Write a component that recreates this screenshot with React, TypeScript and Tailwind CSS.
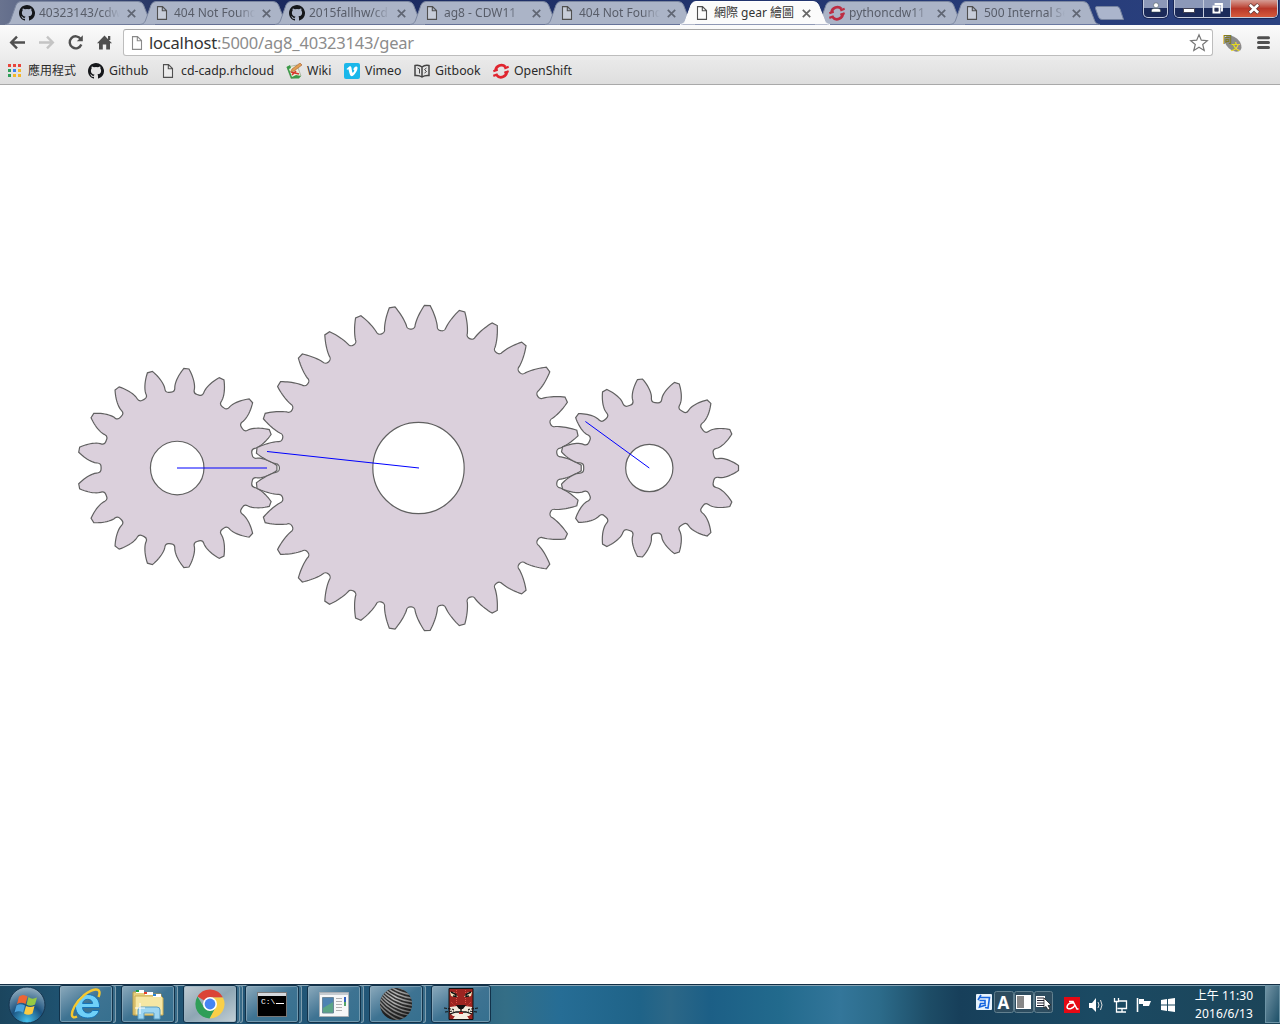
import React from "react";

const M = 10.5;
const polar = (r: number, a: number) => [r * Math.cos(a), r * Math.sin(a)];
const inv = (rb: number, r: number) => {
  const t = Math.sqrt(Math.max(0, (r * r) / (rb * rb) - 1));
  return t - Math.atan(t);
};

function gearPath(z: number) {
  const rp = (z * M) / 2;
  const rb = rp * Math.cos((25 * Math.PI) / 180);
  const ra = rp + M;
  const rr = rp - 1.25 * M;
  const fr = 1.5 * 0.25 * M;
  const rf = Math.sqrt((rr + fr) ** 2 - fr ** 2);
  const start = Math.max(rb, rf);
  const half = Math.PI / z / 2;
  const at = (r: number) => half + inv(rb, rp) - inv(rb, r);
  const fillet = Math.atan(fr / (fr + rr));
  const f = (p: number[]) => p[0].toFixed(2) + " " + p[1].toFixed(2);
  let d = "";
  for (let i = 0; i < z; i++) {
    const c = (i * 2 * Math.PI) / z;
    const base = at(start);
    const rootR = polar(rr, c - base - fillet);
    d += (i === 0 ? "M" : "L") + f(rootR);
    d += `A${fr} ${fr} 0 0 0 ${f(polar(rf, c - base))}`;
    for (let k = 0; k <= 10; k++) {
      const r = start + ((ra - start) * k) / 10;
      d += "L" + f(polar(r, c - at(r)));
    }
    for (let k = 10; k >= 0; k--) {
      const r = start + ((ra - start) * k) / 10;
      d += "L" + f(polar(r, c + at(r)));
    }
    d += "L" + f(polar(rf, c + base));
    d += `A${fr} ${fr} 0 0 0 ${f(polar(rr, c + base + fillet))}`;
  }
  const h = rp * 0.3;
  return d + `ZM${h} 0A${h} ${h} 0 1 0 ${-h} 0A${h} ${h} 0 1 0 ${h} 0Z`;
}

function Gears() {
  const gears = [
    { x: 177.2, z: 17 },
    { x: 418.5, z: 29 },
    { x: 649.3, z: 15 },
  ];
  return (
    <svg width="1280" height="899" viewBox="0 85 1280 899" className="block">
      {gears.map((g) => (
        <path key={g.x} d={gearPath(g.z)} transform={`translate(${g.x} 468)`} fill="#dbd0dc" stroke="#606060" strokeWidth="1.200" fillRule="evenodd" />
      ))}
      <path d="M177 468H267M419 468L267 451.5M649.3 468L585.4 421.5" stroke="#0000ff" fill="none" />
    </svg>
  );
}

const Page = ({ c = "#505050" }: { c?: string }) => (
  <svg width="16" height="16" viewBox="0 0 16 16" className="shrink-0" fill="#ffffff55" stroke={c} strokeWidth="1.100">
    <path d="M3.500 1.600H8.500L12.500 5.600V14.400H3.500ZM8.300 1.800V5.800H12.300" />
  </svg>
);
const Github = () => (
  <svg width="16" height="16" viewBox="0 0 16 16" className="shrink-0" fill="#15171a">
    <path d="M8 0C3.6 0 0 3.6 0 8c0 3.5 2.3 6.500 5.500 7.600.4.1.5-.2.5-.4v-1.400c-2.200.500-2.700-.9-2.700-.9-.4-.9-.9-1.200-.9-1.200-.7-.5.1-.5.1-.5.8.1 1.200.8 1.200.8.7 1.200 1.900.9 2.300.7.100-.5.3-.9.5-1.100-1.800-.2-3.600-.9-3.600-4 0-.9.3-1.600.8-2.100-.1-.2-.4-1 .1-2.100 0 0 .7-.2 2.200.8a7.500 7.500 0 0 1 4 0c1.500-1 2.200-.8 2.200-.8.4 1.100.2 1.900.1 2.100.5.6.8 1.300.8 2.100 0 3.100-1.900 3.700-3.700 3.900.3.300.6.800.6 1.500v2.200c0 .2.1.5.5.4A8 8 0 0 0 8 0Z" />
  </svg>
);
const OpenShift = ({ c = "#e0252f" }: { c?: string }) => (
  <svg width="16" height="16" viewBox="0 0 16 16" className="shrink-0" fill="none" stroke={c} strokeWidth="2.700">
    <path d="M2.600 7.500A5.700 5.700 0 0 1 12.500 4M13.700 8A5.700 5.700 0 0 1 3.500 12" />
    <path d="M.3 8.200L4.700 6.600M11.300 5.400L15.700 3.800M.3 12.900L4.700 11.300M11.300 9.800L15.700 8.200" strokeWidth="2.200" />
  </svg>
);

const tabs = [
  { t: "40323143/cdw", i: "g" },
  { t: "404 Not Found", i: "p" },
  { t: "2015fallhw/cd", i: "g" },
  { t: "ag8 - CDW11", i: "p" },
  { t: "404 Not Found", i: "p" },
  { t: "網際 gear 繪圖", i: "p", active: true },
  { t: "pythoncdw11", i: "o" },
  { t: "500 Internal Se", i: "p" },
];

function Tab({ t, i, active }: { t: string; i: string; active?: boolean }) {
  return (
    <div className={"relative -mr-[15px] h-[25px] w-[150px] shrink-0 " + (active ? "z-10" : "")}>
      <svg className="absolute inset-0" width="150" height="25" viewBox="0 0 150 25">
        <path
          d="M0 24.500C4 24 5 22 6 19L11 5Q12.500 1.500 16 1.500H133Q137 1.500 138.500 5L144 19C145 22 146 24 150 24.500"
          fill={active ? "#fbfbfb" : "#abb4c7"}
          stroke={active ? "#fff" : "#7c87a0"}
        />
      </svg>
      <div className="relative flex h-[26px] items-center pl-[14px]">
        {i === "g" ? <Github /> : i === "o" ? <OpenShift c="#bd2d42" /> : <Page />}
        <span
          className={
            "ml-[4px] w-[81px] overflow-hidden whitespace-nowrap text-[12px] " +
            (active ? "text-[#333]" : "text-[#585d69] [mask-image:linear-gradient(90deg,#000_78%,transparent)]")
          }
        >
          {t}
        </span>
        <svg className="ml-[7px] shrink-0" width="9" height="9" viewBox="0 0 9 9" stroke={active ? "#666" : "#606673"} strokeWidth="1.700">
          <path d="M.8 .8L8.200 8.200M8.200 .8L.8 8.200" />
        </svg>
      </div>
    </div>
  );
}

function WindowButtons() {
  return (
    <div className="absolute right-[2px] top-0 flex gap-[6px]">
      <div className="flex h-[18px] w-[25px] justify-center rounded-b-[5px] border border-t-0 border-[#c4cbdc] bg-linear-to-b from-[#8c98b8] from-45% to-[#1c2b5a] to-50% shadow-[0_0_0_1px_#1a2858]">
        <svg width="10" height="11" viewBox="0 0 10 11" className="mt-[2px]" fill="#fff" stroke="#344" strokeWidth=".5">
          <circle cx="5" cy="3.300" r="2.500" />
          <path d="M.5 10V8Q.5 6.500 3 6.500H7Q9.500 6.500 9.500 8V10Z" />
        </svg>
      </div>
      <div className="flex h-[18px] w-[104px] overflow-hidden rounded-b-[5px] border border-t-0 border-[#c4cbdc] shadow-[0_0_0_1px_#1a2858]">
        <div className="flex w-[29px] items-center justify-center border-r border-[#c4cbdc] bg-linear-to-b from-[#8c98b8] from-45% to-[#1c2b5a] to-50%">
          <div className="mt-[3px] h-[5px] w-[12px] border border-[#445] bg-white" />
        </div>
        <div className="flex w-[27px] items-center justify-center border-r border-[#c4cbdc] bg-linear-to-b from-[#8c98b8] from-45% to-[#1c2b5a] to-50%">
          <svg width="13" height="13" viewBox="0 0 13 13" fill="none">
            <path d="M4.500 3V2H11V8.500H10" stroke="#fff" strokeWidth="1.800" />
            <path d="M2.500 4.500H8.500V10.500H2.500Z" stroke="#fff" strokeWidth="2" />
            <path d="M4 6.500H7V9H4Z" stroke="#445" strokeWidth=".6" />
          </svg>
        </div>
        <div className="flex flex-1 items-center justify-center bg-linear-to-b from-[#d59d96] from-0% via-[#b8382a] via-50% to-[#d65a3c]">
          <svg width="14" height="12" viewBox="0 0 14 12" fill="none">
            <path d="M2.500 1.500L11.500 10M11.500 1.500L2.500 10" stroke="#5b3434" strokeWidth="4" />
            <path d="M2.800 1.800L11.200 9.700M11.200 1.800L2.800 9.700" stroke="#fff" strokeWidth="2.600" />
          </svg>
        </div>
      </div>
    </div>
  );
}

function Toolbar() {
  return (
    <div className="flex h-[35px] items-center bg-linear-to-b from-[#fbfbfb] to-[#ebebeb]">
      <svg width="123" height="35" viewBox="0 25 123 35" className="shrink-0" fill="none" stroke="#505050" strokeWidth="2.400">
        <path d="M25 42.500H12M17 36.700L11.200 42.500L17 48.300" />
        <path d="M39 42.500H52M47 36.700L52.800 42.500L47 48.300" stroke="#c4c4c4" />
        <path d="M80.700 39A6 6 0 1 0 81.300 44.500" />
        <path d="M82.800 35.300V41.300H76.800Z" fill="#505050" stroke="none" />
        <path d="M97 43.200L104.500 35.500L112 43.200H110V49.500H106.200V44.500H102.800V49.500H99V43.200ZM108 36H110.300V40H108Z" fill="#505050" stroke="none" />
      </svg>
      <div className="flex h-[27px] w-[1090px] shrink-0 items-center rounded-[3px] border border-[#bdbdbd] border-t-[#a6a6a6] bg-white pl-[5px]">
        <Page c="#8a8a8a" />
        <span className="ml-[4px] flex-1 text-[16.500px] leading-[24px] tracking-[-0.2px] text-[#8c8c8c]">
          <span className="text-[#333]">localhost</span>:5000/ag8_40323143/gear
        </span>
        <svg width="20" height="20" viewBox="0 0 20 20" className="mr-[3px]" fill="#fff" stroke="#777" strokeWidth="1.200">
          <path d="M10 1.700L12.300 7.200L18.300 7.700L13.700 11.500L15.200 17.500L10 14.200L4.800 17.500L6.300 11.500L1.700 7.700L7.700 7.200Z" />
        </svg>
      </div>
      <svg width="67" height="35" viewBox="1213 25 67 35" className="shrink-0">
        <ellipse cx="1233" cy="43.500" rx="10" ry="6.300" transform="rotate(42 1233 43.500)" fill="#8b8b8b" />
        <text x="1223" y="43" fontSize="9" fontWeight="700" fill="#7f7a20" fontFamily="Noto Sans CJK TC, sans-serif">同</text>
        <text x="1231" y="50" fontSize="9" fontWeight="700" fill="#e7d81f" fontFamily="Noto Sans CJK TC, sans-serif">文</text>
        <path d="M1258.500 37.800H1268.500M1258.500 42.600H1268.500M1258.500 47.400H1268.500" stroke="#505050" strokeWidth="3" strokeLinecap="round" />
      </svg>
    </div>
  );
}

function Bookmark({ icon, label, className }: { icon: React.ReactNode; label: string; className: string }) {
  return (
    <div className={"flex shrink-0 items-center gap-[5px] whitespace-nowrap " + className}>
      {icon}
      <span>{label}</span>
    </div>
  );
}

function Bookmarks() {
  const grid = ["#e8453c", "#e8453c", "#e8453c", "#2f9e58", "#3d7ff0", "#f3b72b", "#2f9e58", "#f3b72b", "#f3b72b"];
  return (
    <div className="flex h-[25px] items-center border-b border-[#a9a9a9] bg-linear-to-b from-[#e9e9e9] to-[#dedede] pb-[2px] pl-[8px] text-[12.300px] text-[#2a2a2a]">
      <Bookmark
        className="w-[80px] text-[12px]"
        label="應用程式"
        icon={
          <div className="mr-[2px] grid grid-cols-3 gap-[2px] pb-[2px]">
            {grid.map((c, i) => (
              <div key={i} className="size-[3px]" style={{ background: c }} />
            ))}
          </div>
        }
      />
      <Bookmark className="w-[72px]" label="Github" icon={<Github />} />
      <Bookmark className="w-[126px]" label="cd-cadp.rhcloud" icon={<Page />} />
      <Bookmark
        className="w-[58px]"
        label="Wiki"
        icon={
          <svg width="16" height="16" viewBox="0 0 16 16">
            <path d="M1 4L11 2L15 13L5 15.500Z" fill="#e9eedb" stroke="#9aa58e" strokeWidth=".7" />
            <path d="M.5 4L4 2L5 5L3 6L6 14L10 12L15 13L13 15.500L5 15.500Z" fill="#3b9a48" />
            <path d="M5 9L13 11M6 12L10 8" stroke="#d7372b" strokeWidth="1.600" />
            <path d="M14 0L6 6L4.500 9L8 8L16 2Z" fill="#e0a052" stroke="#a85a34" strokeWidth=".6" />
          </svg>
        }
      />
      <Bookmark
        className="w-[70px]"
        label="Vimeo"
        icon={
          <svg width="16" height="16" viewBox="0 0 16 16">
            <rect width="16" height="16" rx="2" fill="#1ab7ea" />
            <path d="M2.500 6L5 3.700C6.500 2.800 7.200 3.500 7.500 5L8.200 9C8.500 10 9 9.900 9.700 8.700C10.600 7.200 10.500 6.400 9.200 6.900C9.700 4.700 11 3.300 12.500 3.500C14 3.700 13.700 6 12.700 8C11.500 10.300 9.300 13 7.800 13.200C6 13.200 5.500 10 4.500 6.500C4.200 5.800 3.800 6.300 3.200 6.700Z" fill="#fff" />
          </svg>
        }
      />
      <Bookmark
        className="w-[79px]"
        label="Gitbook"
        icon={
          <svg width="16" height="16" viewBox="0 0 16 16" fill="none" stroke="#444" strokeWidth="1.500">
            <path d="M1 2.500Q5 1.500 8 4Q11 1.500 15 2.500V12.500Q11 12 8 14Q5 12 1 12.500ZM8 4V14" />
            <path d="M3.500 5L5.500 6V10.500M12.500 5L10.500 6.500L12.500 8.500L10.500 10" strokeWidth="1" />
          </svg>
        }
      />
      <Bookmark className="w-[90px]" label="OpenShift" icon={<OpenShift />} />
    </div>
  );
}

const IE = (
  <svg width="32" height="32" viewBox="0 0 32 32">
    <path
      d="M29.500 19.500H12.500C12.800 23 15 25 18 25C20.200 25 21.600 24.200 22.500 22.500H29C27.500 27.500 23.500 30 17.800 30C10.500 30 5.500 25.500 5.500 18.500C5.500 11.500 10.500 6.500 17.500 6.500C25 6.500 30 11.500 29.500 19.500ZM12.600 15.500H22.600C22.300 12.800 20.500 11.300 17.700 11.300C14.900 11.300 13 12.800 12.600 15.500Z"
      fill="#6fd0f8"
      stroke="#1573b8"
      fillRule="evenodd"
    />
    <path d="M7 28.500C1 31.500 .5 26 4.500 18.500C9 10 19 2 25.500 1.500C29.500 1.200 30.500 4.500 28.500 9" fill="none" stroke="#f6c72f" strokeWidth="2.400" />
  </svg>
);
const Explorer = (
  <svg width="32" height="32" viewBox="0 0 32 32">
    <path d="M1 4H12L14 6H29V27H1Z" fill="#e6cf7d" stroke="#b99c48" />
    <path d="M3 8H29L31 10V27H3Z" fill="#f6e7a4" stroke="#c9ab55" />
    <path d="M4 2H12V5H4ZM13 4H21V7H13ZM21 6H29V9H21Z" fill="#fff" />
    <path d="M4 2H7V4H4Z" fill="#1ca341" /><path d="M12 4H15V6H12Z" fill="#e53d2b" /><path d="M21 6H24V8H21Z" fill="#2583d6" />
    <path d="M6 31V22Q6 19 9 19H25Q28 19 28 22V31H22V25H12V31Z" fill="#9dd6f2" stroke="#5b9ec4" />
    <path d="M8 15V26M3 20H13" stroke="#fff" />
  </svg>
);
const Chrome = (
  <svg width="32" height="32" viewBox="0 0 32 32">
    <path d="M16 16L3.500 8.500A14.500 14.500 0 0 1 29 9.500H16Z" fill="#db4437" />
    <path d="M29 9.500A14.500 14.500 0 0 1 15.500 30.500L22 18L16 9.500Z" fill="#f9cf48" />
    <path d="M3.500 8.500A14.500 14.500 0 0 0 15.500 30.500L21.500 19.500L10 19.500Z" fill="#2f9e58" />
    <circle cx="16" cy="16" r="7" fill="#fff" /><circle cx="16" cy="16" r="5.400" fill="#4584f3" />
  </svg>
);
const Cmd = (
  <div className="h-[25px] w-[30px] border border-[#777] bg-black">
    <div className="h-[3px] bg-[#d5d9dd]" />
    <div className="flex pl-[3px] font-['Liberation_Mono'] text-[8px] leading-[11px] text-white">
      C:\<span className="ml-[1px] mt-[7px] h-[1px] w-[8px] bg-white" />
    </div>
  </div>
);
const Doc = (
  <svg width="32" height="32" viewBox="0 0 32 32">
    <path d="M1.500 4.500H30.500V28.500H1.500Z" fill="#f7f8f8" stroke="#a8afb5" />
    <path d="M2 5H30V7H2Z" fill="#c6ccd1" />
    <path d="M4.500 9.500H15.500V25H4.500Z" fill="#5ba486" stroke="#6c879a" />
    <path d="M5 10H15V14L5 20Z" fill="#4e83b2" />
    <path d="M18 10.500H24M18 13.500H24M18 16.500H24M18 19.500H24M18 22.500H24" stroke="#b1b1b1" />
    <path d="M26 9H28V14H26Z" fill="#315fbe" /><path d="M26 14H28V18H26Z" fill="#55a568" />
  </svg>
);
const Ball = (
  <svg width="34" height="34" viewBox="0 0 34 34">
    <defs>
      <clipPath id="ball"><circle cx="17" cy="17" r="16" /></clipPath>
      <radialGradient id="shade" cx=".45" cy=".3" r=".75"><stop offset="0" stopColor="#000" stopOpacity="0" /><stop offset="1" stopColor="#000" stopOpacity=".55" /></radialGradient>
    </defs>
    <circle cx="17" cy="17" r="16" fill="#383838" />
    <g clipPath="url(#ball)" fill="none" stroke="#c4c4c4" strokeWidth="1.500">
      {[-20, -16.500, -13, -9.500, -6, -2.500, 1, 4.500, 8, 12, 16].map((y) => (
        <path key={y} d={`M0 ${y + 2}Q12 ${y + 18} 34 ${y + 21}`} />
      ))}
    </g>
    <circle cx="17" cy="17" r="16" fill="url(#shade)" />
  </svg>
);
const Lion = (
  <svg width="34" height="32" viewBox="0 0 34 32">
    <path d="M5 .5H29V31.500H5Z" fill="#9c2420" stroke="#111" />
    <path d="M12.500 2V16M21.500 2V16M7 14L11 18M27 14L23 18" stroke="#e05045" strokeDasharray="1 1" />
    <path d="M6 4H10L14 9H10L7 8ZM28 4H24L20 9H24L27 8Z" fill="#f4e3bd" />
    <path d="M7 4L12 6.500V8.500L9 8M27 4L22 6.500V8.500L25 8" fill="none" stroke="#111" strokeWidth="1.400" />
    <path d="M6 19L13 18L17 22L21 18L28 19V25L25 28H9L6 25Z" fill="#f1eadc" />
    <path d="M12 17H22L19 21H15Z" fill="#111" />
    <path d="M17 20V24M6 26L12 24H22L28 26" stroke="#111" strokeWidth="1.300" fill="none" />
    <path d="M9 31L12 26H22L25 31Z" fill="#f4eee2" />
    <path d="M15 24H19V26H15Z" fill="#b3231f" />
    <path d="M0 20L10 21.500M1 24L10 23M34 20L24 21.500M33 24L24 23" stroke="#111" strokeDasharray="3 1" />
  </svg>
);

function TaskButton({ icon, active, stack }: { icon: React.ReactNode; active?: boolean; stack: boolean }) {
  return (
    <div className="flex h-[38px] w-[62px] shrink-0">
      <div
        className={
          "flex h-[38px] items-center justify-center rounded-[3px] border border-[#12324a] shadow-[inset_0_0_0_1px_#9ab4c399] " +
          (stack ? "w-[54px] " : "w-[60px] ") +
          (active
            ? "bg-linear-to-br from-[#c1ccd3] via-[#8ea6b4] to-[#c4d0d6]"
            : "bg-linear-to-br from-[#8caabc] via-[#3e7392] to-[#36708f]")
        }
      >
        {icon}
      </div>
      {stack && <div className="h-[38px] w-[3px] rounded-r-[3px] border border-l-0 border-[#7e9dae] bg-[#386b88]" />}
      {active && <div className="h-[38px] w-[3px] rounded-r-[3px] border border-l-0 border-[#7e9dae] bg-[#386b88]" />}
    </div>
  );
}

function Taskbar() {
  const items = [IE, Explorer, Chrome, Cmd, Doc, Ball, Lion];
  return (
    <div className="flex h-[40px] border-t border-[#142f45] bg-[linear-gradient(90deg,#1b455e_0px,#1f5270_60px,#23587a_440px,#346e86_505px,#266d95_560px,#1f6388_640px,#2c6787_670px,#1c5f86_710px,#226a8d_780px,#33769a_840px,#2c6b8a_880px,#1d4c66_930px,#173f5a_960px,#1b4a63_1100px,#1c4458_1280px)] shadow-[inset_0_1px_0_#86a3b3]">
      <div className="flex w-[59px] shrink-0 items-center pl-[8px]">
        <svg width="38" height="38" viewBox="0 0 38 38">
          <defs>
            <radialGradient id="orb" cx=".5" cy=".95" r=".9">
              <stop offset="0" stopColor="#45c1ec" /><stop offset=".5" stopColor="#1b527f" /><stop offset="1" stopColor="#8ba8bb" />
            </radialGradient>
          </defs>
          <circle cx="19" cy="19" r="18" fill="url(#orb)" stroke="#16354f" />
          <path d="M11 10.500Q15 7.500 19.500 10.500L17.500 18Q13 15.500 9 18Z" fill="#ee6533" />
          <path d="M20.500 11Q24 14 29 11.500L27 18.500Q22 21 18.500 18.500Z" fill="#95c944" />
          <path d="M8.500 19.500Q12.500 17 17 19.500L15 26.500Q11 24 6.500 26.500Z" fill="#4ba2dc" />
          <path d="M18 20Q22 22 26.500 20L24.500 27.500Q20 30 16 27.500Z" fill="#fbcb42" />
        </svg>
      </div>
      {items.map((icon, i) => (
        <TaskButton key={i} icon={icon} active={i === 2} stack={i < 6} />
      ))}
      <div className="flex-1" />
      <svg width="212" height="39" viewBox="972 985 212 39" className="shrink-0">
        <rect x="976" y="994" width="16" height="16" rx="1" fill="#e8f3fc" />
        <path d="M981 995L978 1000M980 997.500H989.500L988 1008L985 1007.500M979.500 1000.500H985V1003.500H980.500L979.500 1007L986 1005" fill="none" stroke="#1766df" strokeWidth="1.600" />
        <g fill="#2d4c5f" stroke="#62808f"><rect x="994.500" y="991.500" width="19" height="21" rx="2" /><rect x="1014.500" y="991.500" width="19" height="21" rx="2" /><rect x="1034.500" y="991.500" width="18" height="21" rx="2" /></g>
        <text x="997.500" y="1008.500" fontSize="17" fontWeight="700" fill="#fff" fontFamily="Open Sans, sans-serif">A</text>
        <path d="M1016 995H1031V1009H1016Z" fill="#fff" /><path d="M1017 996H1024V1008H1017Z" fill="#888" />
        <path d="M1036 996H1045V1007H1036Z" fill="#fff" /><path d="M1037 998H1044M1037 1000.500H1044M1037 1003H1044M1037 1005.500H1044" stroke="#223" />
        <path d="M1044 998L1051 1005L1048 1005.500L1050 1009L1048 1010L1046 1006.500L1044 1008Z" fill="#fff" stroke="#111" strokeWidth=".7" />
        <path d="M1064 997H1080V1013H1064Z" fill="#e50914" />
        <path d="M1069 1001.500H1073L1077 1009H1078.500M1073.500 1003Q1067.500 1002.500 1067 1007Q1067.500 1009.500 1071 1008.500Q1074 1007.500 1075 1005" fill="none" stroke="#fff" strokeWidth="1.500" />
        <path d="M1089 1003H1092L1096 998V1012L1092 1008H1089Z" fill="#fff" /><path d="M1098 1002Q1100 1005 1098 1008M1100.500 1000Q1103.500 1005 1100.500 1010" stroke="#ddd" fill="none" />
        <path d="M1118 1001H1126.500V1008.500H1117.500M1122 1009V1012M1118 1012H1126M1116.500 1004V1012H1119M1114.500 998V1001.500H1118.500V998M1116.500 1002V1004" fill="none" stroke="#fff" strokeWidth="1.300" />
        <path d="M1137.500 998V1012" stroke="#fff" strokeWidth="1.600" /><path d="M1139 999H1144V1001H1151L1149 1006H1143V1004H1139Z" fill="#fff" />
        <path d="M1161 1000L1167 999V1004.500H1161ZM1168 999L1175 998V1004.500H1168ZM1161 1005.500H1167V1011L1161 1010ZM1168 1005.500H1175V1012L1168 1011Z" fill="#fff" />
      </svg>
      <div className="w-[80px] shrink-0 pt-[2px] text-center text-[12px] leading-[18px] tracking-[0.1px] text-white">
        <div>上午 11:30</div>
        <div>2016/6/13</div>
      </div>
      <div className="ml-[1px] h-[38px] w-[15px] shrink-0 border border-[#6c93a5] bg-linear-to-br from-[#7193a4] to-[#1c5068]" />
    </div>
  );
}

export default function App() {
  return (
    <div className="h-[1024px] w-[1280px] overflow-hidden bg-white font-['Noto_Sans','Noto_Sans_CJK_TC',sans-serif]">
      <div className="relative flex h-[25px] overflow-hidden bg-linear-to-r from-[#69738f] via-[#19275b] via-15% to-[#2b4281] pl-[5px]">
        {tabs.map((t, i) => (
          <Tab key={i} {...t} />
        ))}
        <svg width="34" height="25" viewBox="0 0 34 25" className="ml-[7px] shrink-0">
          <path d="M5 6.500H25Q27 6.500 28 9L31.500 19.500H10Q7.500 19.500 6.500 17L3.500 8.500Q3 6.500 5 6.500Z" fill="#abb5cc" stroke="#76839f" />
        </svg>
        <WindowButtons />
      </div>
      <Toolbar />
      <Bookmarks />
      <Gears />
      <Taskbar />
    </div>
  );
}
